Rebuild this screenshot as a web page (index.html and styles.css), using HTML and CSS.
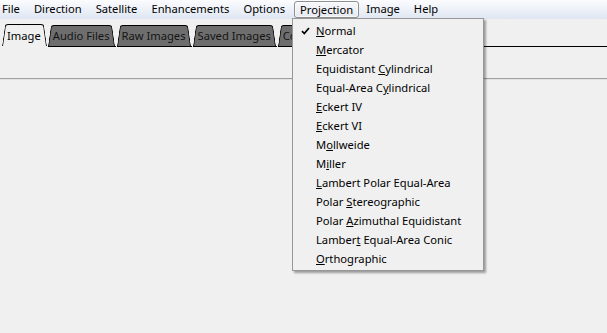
FILE: index.html
```html
<!DOCTYPE html>
<html lang="en">
<head>
    <meta charset="UTF-8">
    <title>Projection menu</title>
    <link rel="stylesheet" href="styles.css">
</head>
<body>
    <div id="menubar">
        <span class="menu-item first">File</span>
        <span class="menu-item">Direction</span>
        <span class="menu-item">Satellite</span>
        <span class="menu-item">Enhancements</span>
        <span class="menu-item">Options</span>
        <span class="menu-item open">Projection</span>
        <span class="menu-item">Image</span>
        <span class="menu-item">Help</span>
    </div>

    <div id="tabs">
        <div class="tab active"><span>Image</span></div>
        <div class="tab"><span>Audio Files</span></div>
        <div class="tab"><span>Raw Images</span></div>
        <div class="tab"><span>Saved Images</span></div>
        <div class="tab"><span>Composite</span></div>
        <div class="tab-fill"></div>
    </div>
    <div id="tab-panel"></div>
    <div id="content"></div>

    <div id="projection-menu">
        <div class="entry checked">
            <svg class="check" width="9" height="8" viewBox="0 0 9 8"><path d="M1 4.2 L3.3 6.5 L8 1" fill="none" stroke="#000" stroke-width="1.7"/></svg>
            <span><u>N</u>ormal</span>
        </div>
        <div class="entry"><span><u>M</u>ercator</span></div>
        <div class="entry"><span>Equidistant <u>C</u>ylindrical</span></div>
        <div class="entry"><span>Equal-Area C<u>y</u>lindrical</span></div>
        <div class="entry"><span><u>E</u>ckert IV</span></div>
        <div class="entry"><span><u>E</u>ckert VI</span></div>
        <div class="entry"><span>M<u>o</u>llweide</span></div>
        <div class="entry"><span>M<u>i</u>ller</span></div>
        <div class="entry"><span><u>L</u>ambert Polar Equal-Area</span></div>
        <div class="entry"><span>Polar <u>S</u>tereographic</span></div>
        <div class="entry"><span>Polar <u>A</u>zimuthal Equidistant</span></div>
        <div class="entry"><span>Lamber<u>t</u> Equal-Area Conic</span></div>
        <div class="entry"><span><u>O</u>rthographic</span></div>
    </div>
</body>
</html>
```

FILE: styles.css
```css
body {
    font-family: 'Noto Sans', sans-serif;
    font-size: 11.2px;
    margin: 0;
    padding: 0;
    background-color: #f0f0f0;
    color: #000;
    height: 333px;
    overflow: hidden;
    position: relative;
}

#menubar {
    display: flex;
    height: 19px;
    align-items: center;
    background: linear-gradient(#fbfcfe, #dfe6f2);
}

.menu-item {
    padding: 0 7px;
    height: 19px;
    line-height: 18px;
    box-sizing: border-box;
}

.menu-item.first {
    padding-left: 2px;
}

.menu-item.open {
    margin: 0 0 0 2px;
    padding: 0 5px;
    height: 17px;
    line-height: 16px;
    border: 1px solid #8e8f8f;
    border-radius: 3px;
    background: linear-gradient(#f7f8fa, #e6eaf0);
    box-shadow: inset 0 0 0 1px rgba(255, 255, 255, 0.6);
}

#tabs {
    display: flex;
    align-items: flex-end;
    height: 28px;
}

.tab {
    position: relative;
    z-index: 0;
    height: 21px;
    line-height: 21px;
    padding: 0 6px 0 5px;
    margin-left: 1px;
    border-bottom: 1px solid #000;
    color: #141414;
}

.tab::before,
.tab::after {
    content: '';
    position: absolute;
    top: 0;
    bottom: 0;
    width: 55%;
    background-color: #6e6e6e;
    border-top: 1px solid #000;
    z-index: -1;
    transform-origin: bottom;
}

.tab::before {
    left: 0;
    border-left: 1px solid #000;
    border-top-left-radius: 3px;
    transform: skewX(-8deg);
}

.tab::after {
    right: 0;
    border-right: 1px solid #000;
    border-top-right-radius: 3px;
    transform: skewX(8deg);
}

.tab.active {
    margin-left: 2px;
    height: 22px;
    line-height: 23px;
    border-bottom-color: transparent;
    color: #000;
}

.tab.active::before,
.tab.active::after {
    background-color: #f0f0f0;
}

.tab-fill {
    flex-grow: 1;
    border-bottom: 1px solid #000;
}

#tab-panel {
    height: 31px;
    border-bottom: 1px solid #a0a0a0;
}

#content {
    border-top: 1px solid #e3e3e3;
}

#projection-menu {
    position: absolute;
    left: 292px;
    top: 18px;
    width: 190px;
    padding: 2px 0 2px;
    background-color: #f0f0f0;
    border: 1px solid #979797;
    box-shadow: 2px 2px 2px rgba(0, 0, 0, 0.35);
}

.entry {
    position: relative;
    height: 19px;
    line-height: 19px;
    padding-left: 23px;
    white-space: nowrap;
}

.check {
    position: absolute;
    left: 8px;
    top: 6px;
}

u {
    text-decoration: underline;
    text-underline-offset: 1px;
}
```
